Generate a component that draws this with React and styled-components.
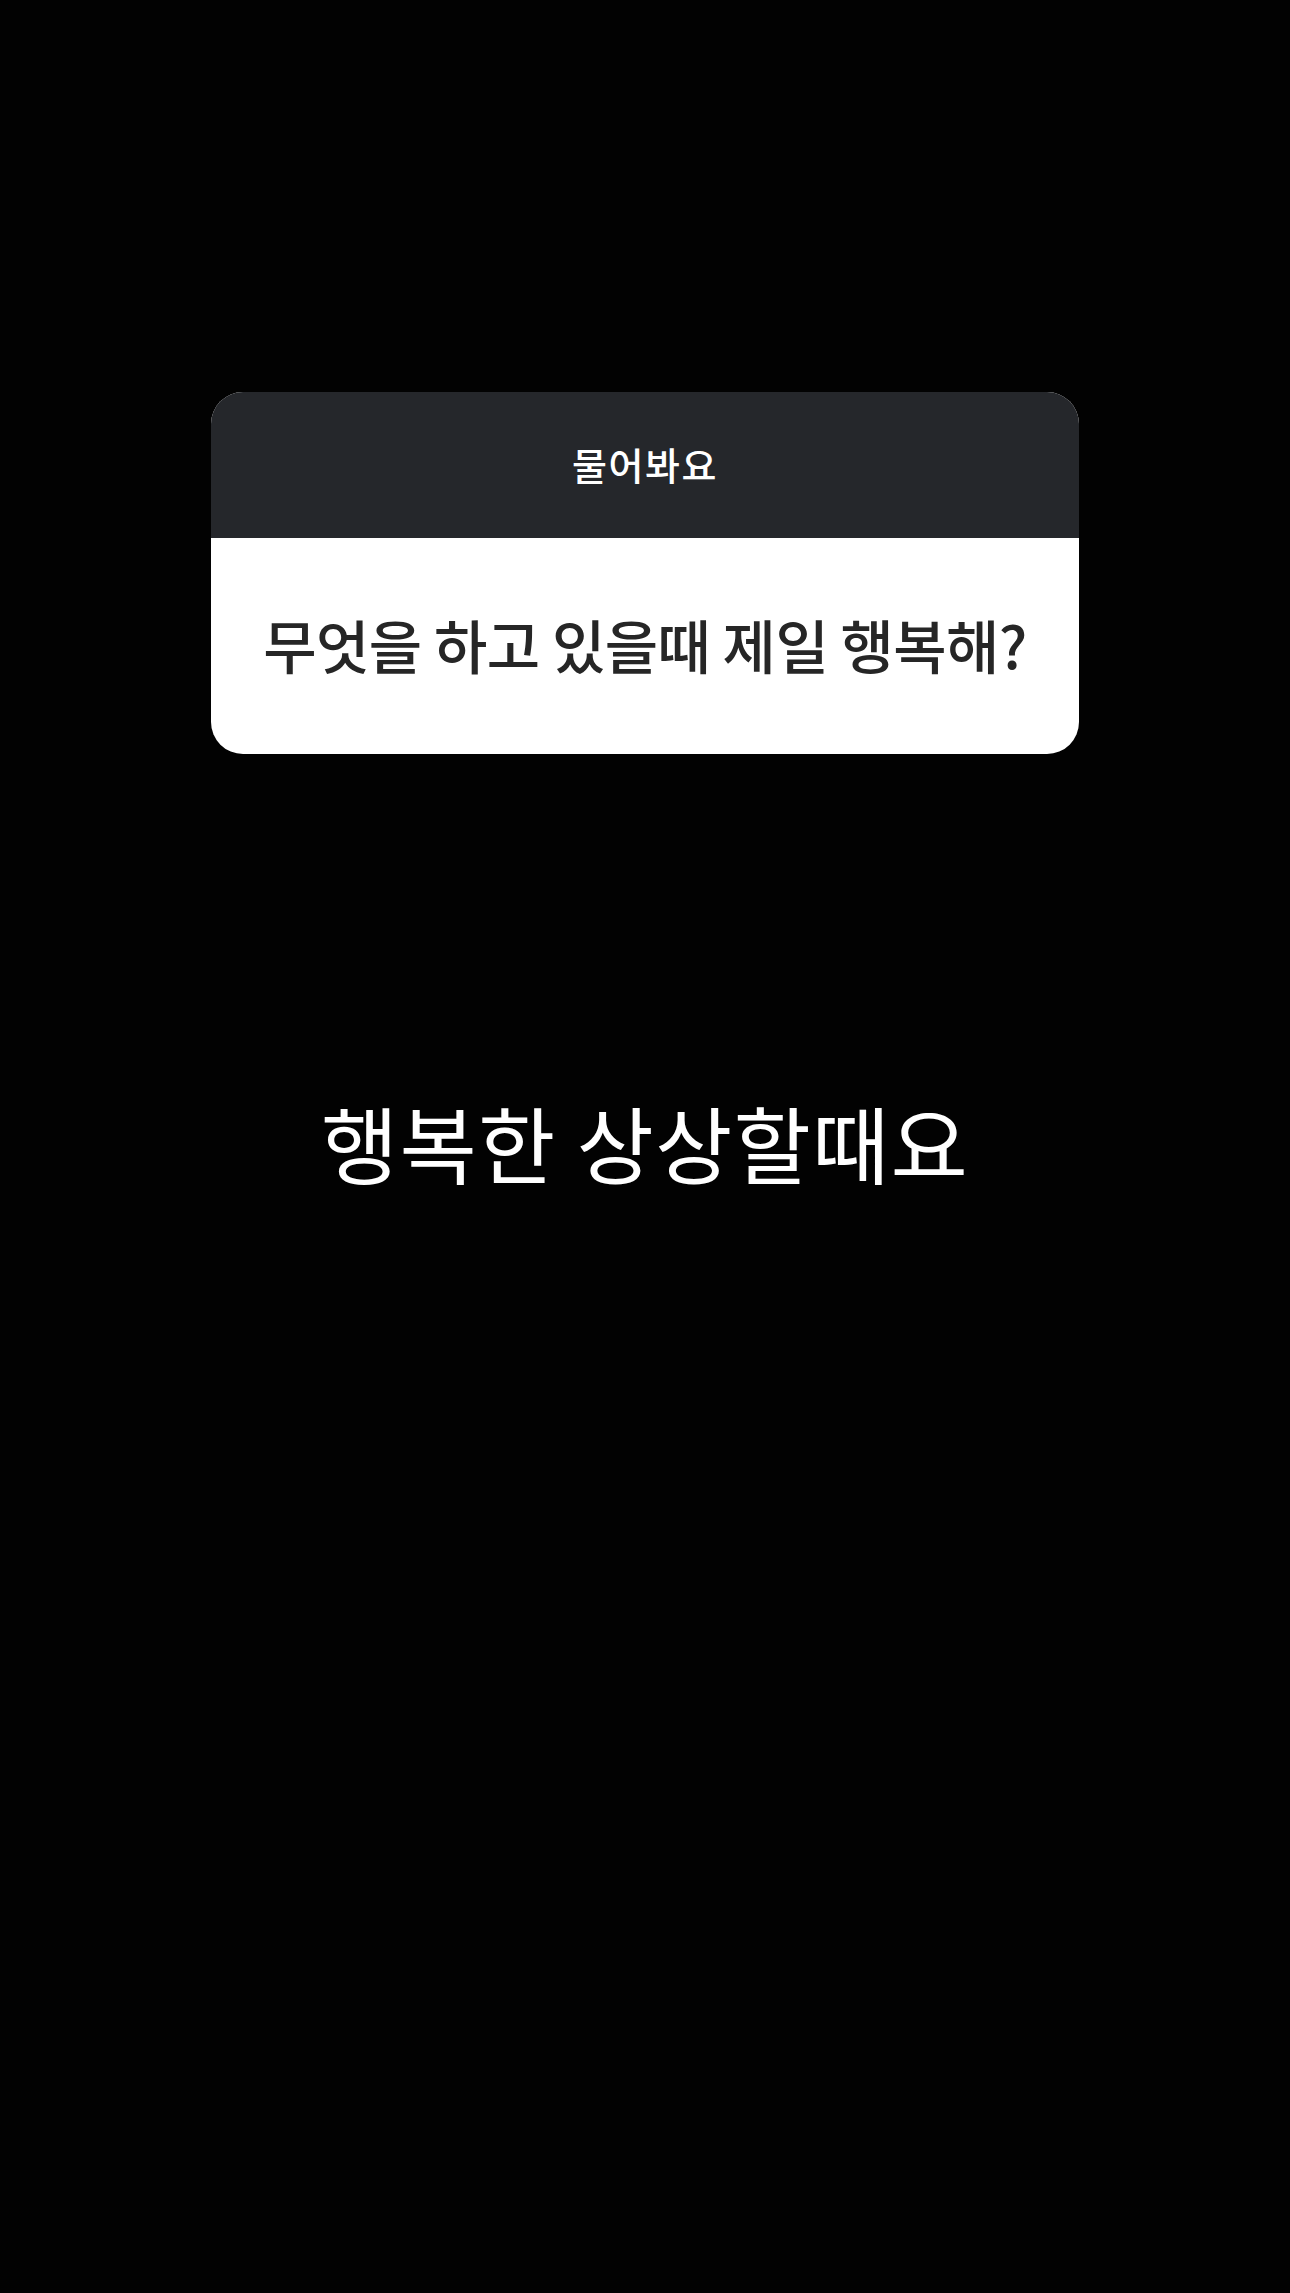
import React from "react";
import styled, { createGlobalStyle } from "styled-components";

const GlobalStyle = createGlobalStyle`
  html, body {
    margin: 0;
    padding: 0;
    background: #020202;
  }
  body {
    font-family: "Noto Sans CJK KR", "Noto Sans", sans-serif;
  }
`;

const Screen = styled.div`
  width: 1290px;
  height: 2293px;
  background: #020202;
  display: flex;
  flex-direction: column;
  align-items: center;
  padding-top: 392px;
  box-sizing: border-box;
`;

const QuestionCard = styled.div`
  width: 868px;
  border-radius: 32px;
  overflow: hidden;
  background: #ffffff;
`;

const CardHeader = styled.div`
  height: 146px;
  background: #25272b;
  color: #ffffff;
  display: flex;
  align-items: center;
  justify-content: center;
  font-size: 38px;
  font-weight: 500;
  letter-spacing: 1.5px;
  padding-bottom: 4px;
  box-sizing: border-box;
`;

const CardBody = styled.div`
  height: 216px;
  display: flex;
  align-items: center;
  justify-content: center;
  color: #262626;
  font-size: 58px;
  font-weight: 500;
  letter-spacing: -0.6px;
  padding-bottom: 4px;
  box-sizing: border-box;
`;

const Answer = styled.div`
  margin-top: 346px;
  color: #ffffff;
  font-size: 84px;
  font-weight: 400;
  letter-spacing: 1.2px;
  line-height: 1;
`;

export default function App() {
  return (
    <Screen>
      <GlobalStyle />
      <QuestionCard>
        <CardHeader>물어봐요</CardHeader>
        <CardBody>무엇을 하고 있을때 제일 행복해?</CardBody>
      </QuestionCard>
      <Answer>행복한 상상할때요</Answer>
    </Screen>
  );
}
